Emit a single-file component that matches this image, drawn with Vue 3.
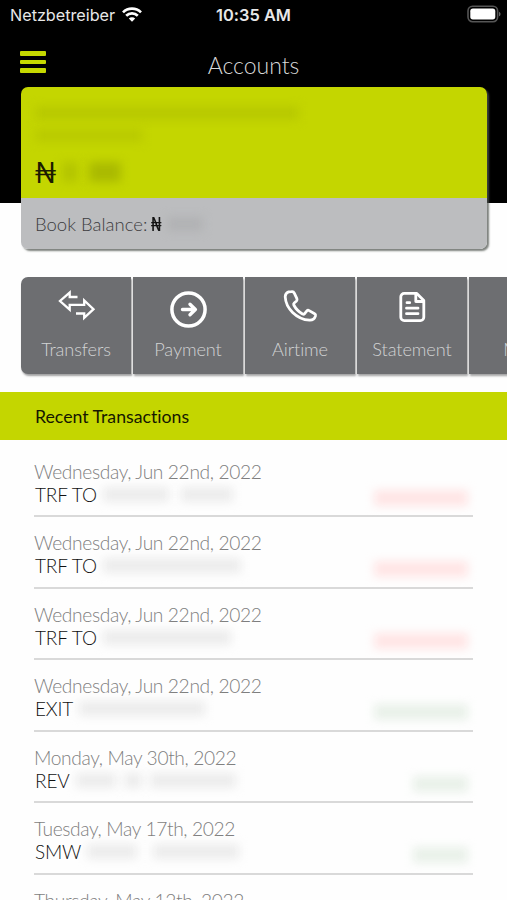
<script setup>
import { ref } from 'vue';

// Quick actions
const actions = ref([
  { id: 'transfers', label: 'Transfers' },
  { id: 'payment', label: 'Payment' },
  { id: 'airtime', label: 'Airtime' },
  { id: 'statement', label: 'Statement' },
  { id: 'more', label: 'More' }
]);

// Recent transactions, hidden parts are given as widths in px
const transactions = ref([
  { date: 'Wednesday, Jun 22nd, 2022', text: 'TRF TO', masks: [66, 52], gap: 12, amount: 94, type: 'debit' },
  { date: 'Wednesday, Jun 22nd, 2022', text: 'TRF TO', masks: [138], gap: 6, amount: 94, type: 'debit' },
  { date: 'Wednesday, Jun 22nd, 2022', text: 'TRF TO', masks: [128], gap: 6, amount: 94, type: 'debit' },
  { date: 'Wednesday, Jun 22nd, 2022', text: 'EXIT', masks: [126], gap: 4, amount: 94, type: 'credit' },
  { date: 'Monday, May 30th, 2022', text: 'REV', masks: [40, 18, 86], gap: 8, amount: 55, type: 'credit' },
  { date: 'Tuesday, May 17th, 2022', text: 'SMW', masks: [50, 86], gap: 16, amount: 55, type: 'credit' },
  { date: 'Thursday, May 12th, 2022', text: 'TRF', masks: [130], gap: 6, amount: 55, type: 'credit' }
]);
</script>

<template>
  <div class="screen">
    <header class="hero">
      <div class="status-bar">
        <div class="carrier">
          <span>Netzbetreiber</span>
          <svg class="wifi" viewBox="0 0 20 15" width="20" height="15">
            <path d="M1 5.4a12.8 12.8 0 0 1 18 0" />
            <path d="M4.2 8.8a8.2 8.2 0 0 1 11.6 0" />
            <path class="dot" d="M6.8 11.5a4.6 4.6 0 0 1 6.4 0L10 14.8z" />
          </svg>
        </div>
        <span class="clock">10:35 AM</span>
        <svg class="battery" viewBox="0 0 34 18" width="34" height="18">
          <rect class="shell" x="1" y="1.3" width="29.6" height="15.4" rx="4.6" />
          <rect class="charge" x="3.3" y="3.6" width="25" height="10.8" rx="2.6" />
          <path class="cap" d="M32 6.7c2 .8 2 3.8 0 4.6z" />
        </svg>
      </div>

      <div class="nav">
        <button class="menu" aria-label="Menu">
          <span></span>
          <span></span>
          <span></span>
        </button>
        <h1 class="title">Accounts</h1>
      </div>

      <section class="card">
        <div class="card-top">
          <div class="mask account-name"></div>
          <div class="mask account-number"></div>
          <div class="balance">
            <span class="naira">₦</span>
            <span class="mask balance-first"></span>
            <span class="mask balance-last"></span>
          </div>
        </div>
        <div class="card-bottom">
          <span>Book Balance:</span>
          <b class="naira-small">₦</b>
          <span class="mask book-value"></span>
        </div>
      </section>
    </header>

    <nav class="actions">
      <button v-for="action in actions" :key="action.id" class="action">
        <svg v-if="action.id === 'transfers'" class="icon thin" viewBox="0 0 40 40">
          <path d="M21.5 8h-7.800V3.600L4 12l9.700 8.600v-4.800h14.500v-4.400l9.300 8.800-9.300 8.600V24.500H20" />
        </svg>
        <svg v-else-if="action.id === 'payment'" class="icon" viewBox="0 0 40 40">
          <circle class="ring" cx="20.5" cy="20.5" r="16.6" />
          <path class="arrow" d="M14.5 20.5H27M22 15.3l5.4 5.2-5.4 5.2" />
        </svg>
        <svg v-else-if="action.id === 'airtime'" class="icon" viewBox="0 0 40 40">
          <path d="M8.7 2.8c-1.900.8-3.500 2.400-3.500 5C5.800 19.200 16.300 30.400 29.600 31.200c3 .1 5.100-1.700 5.900-4.300.3-1.100 0-1.700-.9-2.200l-5.400-3.100c-.9-.5-1.700-.4-2.300.3l-2.300 2.800c-.6.6-1.300.7-2.100.2-3.700-2-6.800-5.200-8.700-8.900-.4-.8-.2-1.400.4-2l2.300-2c.7-.7.8-1.400.4-2.300l-2.600-5.500c-.5-1.200-1.500-1.700-2.700-1.500z" />
        </svg>
        <svg v-else-if="action.id === 'statement'" class="icon" viewBox="0 0 40 40">
          <path d="M12.2 4.400h12.600l7 7.200v16.600a3.400 3.400 0 0 1-3.400 3.400H12.200a3.400 3.400 0 0 1-3.400-3.400V7.800a3.400 3.400 0 0 1 3.400-3.400z" />
          <path d="M23.800 5v7.500h7.500M15 13.700h2.700M14.500 19.200H26M14.500 24.700H26" />
        </svg>
        <span v-else class="icon"></span>
        <span class="action-label">{{ action.label }}</span>
      </button>
    </nav>

    <h2 class="section-title">Recent Transactions</h2>

    <ul class="transactions">
      <li v-for="(item, index) in transactions" :key="index" class="transaction">
        <div class="date">{{ item.date }}</div>
        <div class="details">
          <span>{{ item.text }}</span>
          <span class="masks" :style="{ gap: item.gap + 'px' }">
            <span v-for="(width, i) in item.masks" :key="i" class="mask text-mask" :style="{ width: width + 'px' }"></span>
          </span>
          <span class="mask amount" :class="item.type" :style="{ width: item.amount + 'px' }"></span>
        </div>
      </li>
    </ul>
  </div>
</template>

<style>
body {
  background: #fff;
  overflow: hidden;
}
</style>

<style scoped>
.screen {
  width: 507px;
  height: 900px;
  overflow: hidden;
  background: #fefefe;
  font-family: Lato, sans-serif;
  font-weight: 300;
  font-variant-ligatures: none;
  box-sizing: border-box;
}

.screen * {
  box-sizing: border-box;
}

button {
  border: none;
  background: none;
  padding: 0;
  font: inherit;
  font-variant-ligatures: none;
}

.hero {
  height: 203px;
  margin-bottom: 74px;
  background: #000;
}

.status-bar {
  display: grid;
  grid-template-columns: 1fr auto 1fr;
  align-items: center;
  height: 30px;
  padding: 0 6px 0 10px;
  color: #e8e8e8;
  font-family: Inter, sans-serif;
  font-size: 16.2px;
  font-weight: 400;
}

.carrier {
  display: flex;
  align-items: center;
  gap: 7px;
}

.wifi {
  margin-top: -2px;
}

.wifi path {
  fill: none;
  stroke: #fff;
  stroke-width: 2.7;
}

.wifi .dot {
  fill: #fff;
  stroke: none;
}

.clock {
  margin-right: 4px;
  font-size: 16.4px;
  font-weight: 600;
}

.battery {
  justify-self: end;
  margin-top: -2px;
}

.shell {
  fill: none;
  stroke: #555;
  stroke-width: 1.6;
}

.charge {
  fill: #fff;
}

.cap {
  fill: #666;
}

.nav {
  display: grid;
  grid-template-columns: 27px 1fr 27px;
  align-items: center;
  height: 57px;
  padding: 7px 20px 0;
}

.menu {
  display: flex;
  flex-direction: column;
  gap: 4px;
}

.menu span {
  width: 26px;
  height: 4.5px;
  border-radius: 1px;
  background: #c5d800;
}

.title {
  margin: 5px 0 0;
  color: #d8d8d8;
  font-size: 23px;
  font-weight: 300;
  line-height: 28px;
  text-align: center;
}

.card {
  width: 466px;
  height: 162px;
  margin-left: 21px;
  border-radius: 7px;
  overflow: hidden;
  box-shadow: 2px 2px 2px rgba(80, 85, 80, 0.75);
}

.card-top {
  display: flex;
  flex-direction: column;
  height: 111px;
  padding: 19px 14px 0;
  background: #c4d600;
}

.mask {
  display: block;
  flex-shrink: 0;
  filter: blur(5px);
}

.account-name {
  width: 264px;
  height: 14px;
  background: #b8c900;
}

.account-number {
  width: 108px;
  height: 13px;
  margin-top: 9px;
  background: #b9ca00;
}

.balance {
  display: flex;
  align-items: center;
  height: 30px;
  margin-top: 15px;
}

.naira {
  margin-left: -1px;
  color: #1c1c00;
  font-size: 29px;
  font-weight: 400;
  line-height: 30px;
}

.balance-first {
  width: 16px;
  height: 20px;
  margin-left: 5px;
  background: #b4c500;
}

.balance-last {
  width: 32px;
  height: 20px;
  margin-left: 11px;
  background: #aaba00;
}

.card-bottom {
  display: flex;
  align-items: center;
  height: 51px;
  padding: 1px 14px 0;
  background: #bcbdbf;
  color: #3c3c3e;
  font-size: 18.5px;
}

.naira-small {
  margin-left: 2px;
  color: #111;
  font-size: 18px;
  font-weight: 700;
  transform: scaleX(0.8);
}

.book-value {
  width: 36px;
  height: 14px;
  margin-left: 3px;
  background: #b1b2b4;
}

.actions {
  display: flex;
  gap: 2px;
  width: 560px;
  height: 97px;
  margin-left: 21px;
}

.action {
  display: flex;
  flex-direction: column;
  align-items: center;
  flex-shrink: 0;
  width: 110px;
  padding-top: 12px;
  background: #6d6e71;
  color: #d2d3d4;
  box-shadow: 1px 2px 2px rgba(110, 110, 112, 0.65);
}

.action:first-child {
  border-radius: 7px 0 0 7px;
}

.icon {
  display: block;
  width: 40px;
  height: 40px;
  fill: none;
  stroke: #fff;
  stroke-width: 2.8;
  stroke-linecap: round;
  stroke-linejoin: round;
}

.thin {
  stroke-width: 2.3;
  stroke-linecap: butt;
  stroke-linejoin: miter;
}

.ring {
  stroke-width: 3.5;
}

.arrow {
  stroke-width: 3.4;
}

.action-label {
  margin-top: 9px;
  font-size: 18.2px;
  line-height: 23px;
  letter-spacing: -0.1px;
}

.section-title {
  height: 48px;
  margin: 18px 0 0;
  padding: 1px 0 0 35px;
  background: #c4d600;
  color: #161800;
  font-size: 17.7px;
  font-weight: 400;
  line-height: 48px;
}

.transactions {
  margin: 0;
  padding: 5.5px 34px 0;
  list-style: none;
}

.transaction {
  height: 71.5px;
  padding-top: 14px;
  border-bottom: 2px solid #d9d9d9;
}

.date {
  color: #7e7e7e;
  font-size: 19.2px;
  line-height: 23px;
  letter-spacing: -0.36px;
  white-space: nowrap;
}

.details {
  display: flex;
  align-items: center;
  padding-left: 1px;
  color: #111;
  font-size: 19px;
  line-height: 23px;
  letter-spacing: -0.15px;
}

.masks {
  display: flex;
  margin-left: 6px;
}

.text-mask {
  height: 15px;
  background: #ececec;
}

.amount {
  height: 16px;
  margin: 7px 5px 0 auto;
}

.debit {
  background: #ffe5e5;
}

.credit {
  background: #e9f1e9;
}
</style>
